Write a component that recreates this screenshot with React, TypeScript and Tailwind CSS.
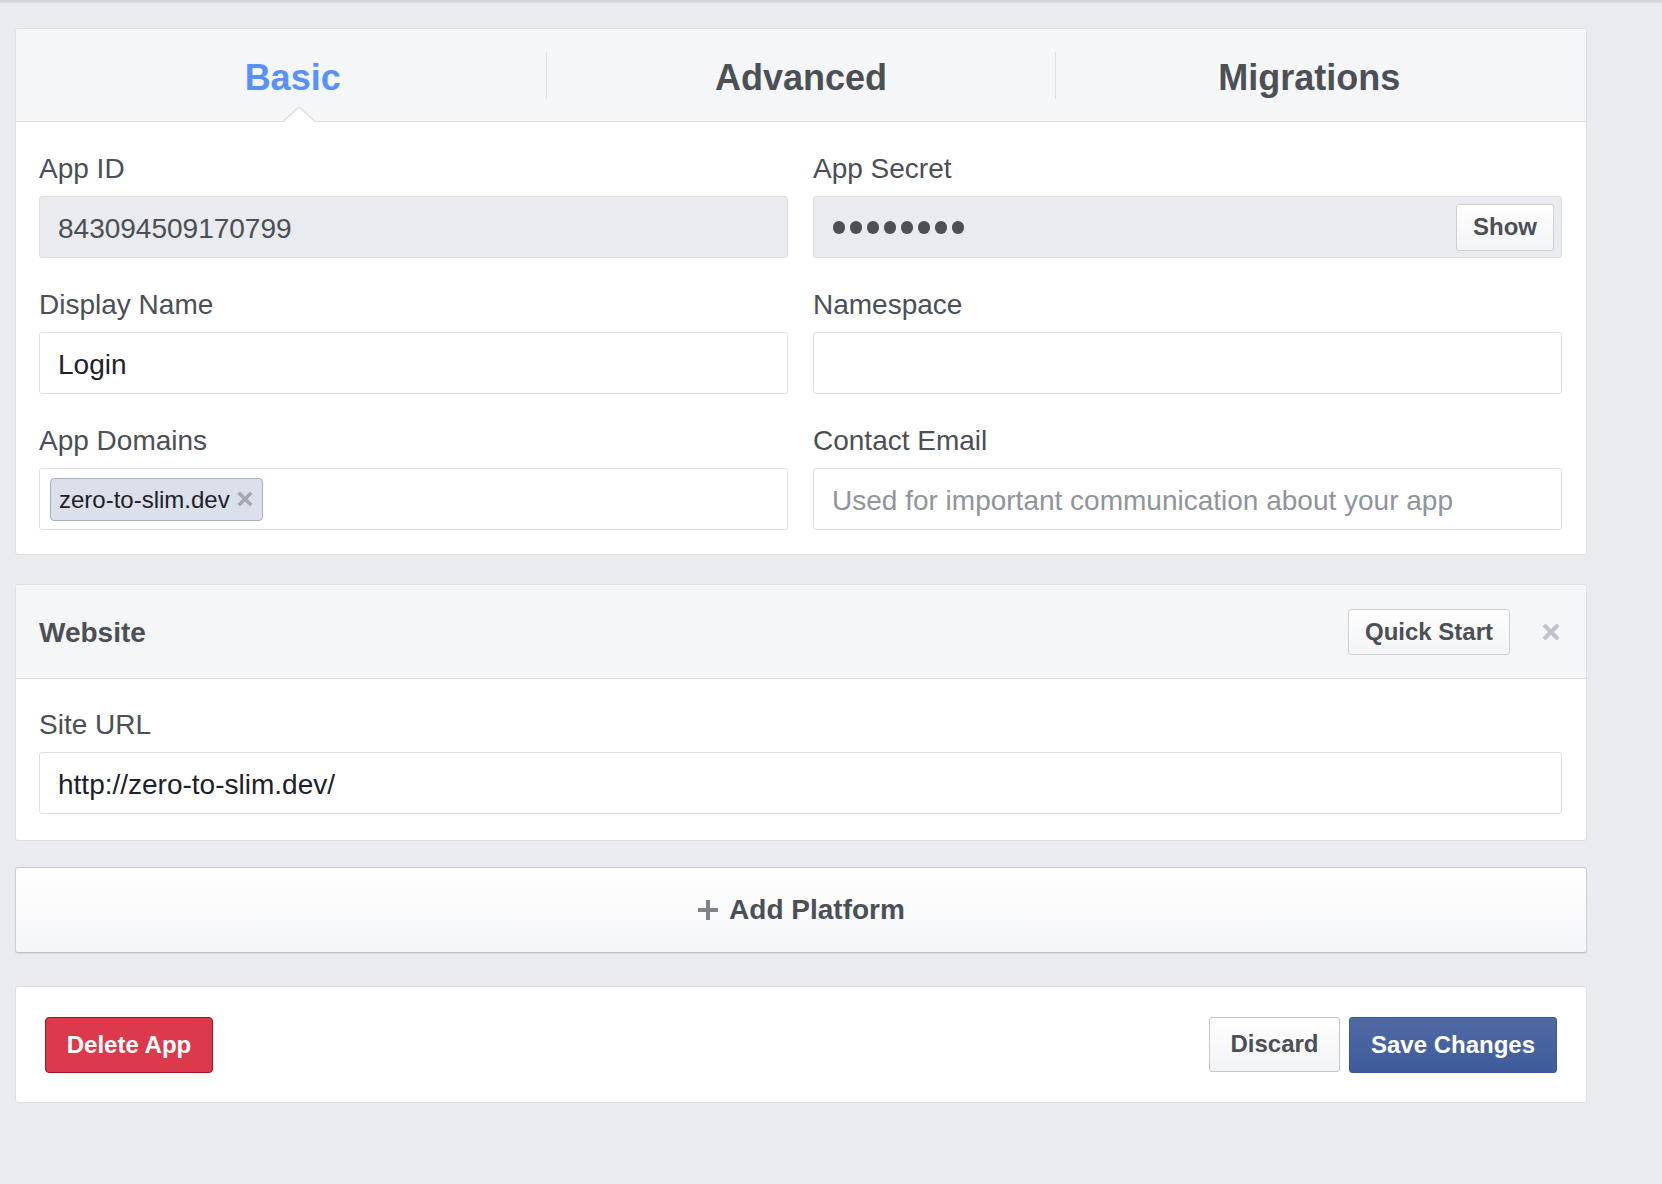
import React from "react"

const label = "block h-[32px] leading-[32px] text-[28px] text-[#4b4f56] mb-[11px]"
const inputBase =
  "h-[62px] w-full rounded-[3px] border border-[#dddfe2] flex items-center text-[28px]"

const XMark: React.FC<{ size: number; stroke: number; color: string }> = ({ size, stroke, color }) => (
  <svg width={size} height={size} viewBox="0 0 20 20">
    <path d="M3 3 L17 17 M17 3 L3 17" stroke={color} strokeWidth={stroke} strokeLinecap="butt" />
  </svg>
)

const Field: React.FC<{ title: string; children: React.ReactNode }> = ({ title, children }) => (
  <div>
    <span className={label}>{title}</span>
    {children}
  </div>
)

const tabs = ["Basic", "Advanced", "Migrations"]

export default function App() {
  return (
    <div className="min-h-[1184px] bg-[#e9ebee] font-['Liberation_Sans',Arial,sans-serif]">
      <div className="h-[3px] bg-gradient-to-b from-[#cbcdd1] to-[#dfe1e4]" />
      <div className="w-[1572px] ml-[15px] pt-[25px] pb-[40px]">
        {/* app settings card */}
        <div className="rounded-[3px] border border-[#dddfe2] bg-white">
          <div className="relative h-[93px] bg-[#f5f6f7] border-b border-[#dddfe2] rounded-t-[3px] flex items-center px-[23px]">
            {tabs.map((t, i) => (
              <React.Fragment key={t}>
                {i > 0 && <div className="w-px h-[47px] bg-[#dddfe2]" />}
                <div
                  className={`flex-1 text-center text-[36px] font-bold pt-[6px] ${
                    i === 0 ? "text-[#5890ff]" : "text-[#4b4f56]"
                  }`}
                >
                  {t}
                </div>
              </React.Fragment>
            ))}
            <svg
              className="absolute left-[267px] bottom-[-1px]"
              width="32"
              height="16"
              viewBox="0 0 32 16"
            >
              <polygon points="0,16 16,1 32,16" fill="#ffffff" />
              <polyline points="0,15.5 16,1 32,15.5" fill="none" stroke="#dddfe2" strokeWidth="1.5" />
            </svg>
          </div>

          <div className="pt-[31px] pb-[24px] pl-[23px] pr-[24px] grid grid-cols-2 gap-x-[25px] gap-y-[31px]">
            <Field title="App ID">
              <div className={`${inputBase} bg-[#e9ebee] pl-[18px] pt-[3px] text-[#4b4f56]`}>843094509170799</div>
            </Field>
            <Field title="App Secret">
              <div className={`${inputBase} bg-[#e9ebee] pl-[19px] pr-[7px] justify-between`}>
                <div className="flex gap-[5px]">
                  {Array.from({ length: 8 }).map((_, i) => (
                    <span key={i} className="w-[12px] h-[13px] rounded-full bg-[#4b4f56]" />
                  ))}
                </div>
                <button className="h-[47px] w-[98px] rounded-[3px] border border-[#ced0d4] bg-gradient-to-b from-white to-[#f3f4f6] text-[24px] font-bold text-[#4b4f56]">
                  Show
                </button>
              </div>
            </Field>
            <Field title="Display Name">
              <div className={`${inputBase} bg-white pl-[18px] pt-[3px] text-[#1d2129]`}>Login</div>
            </Field>
            <Field title="Namespace">
              <div className={`${inputBase} bg-white`} />
            </Field>
            <Field title="App Domains">
              <div className={`${inputBase} bg-white pl-[10px]`}>
                <span className="h-[43px] flex items-center gap-[6px] pl-[8px] pr-[8px] rounded-[4px] border border-[#a3b1cf] bg-[#dbe0eb] text-[24px] text-[#1d2129]">
                  <span className="pt-[2px]">zero-to-slim.dev</span>
                  <XMark size={18} stroke={4} color="#a4a8b0" />
                </span>
              </div>
            </Field>
            <Field title="Contact Email">
              <div className={`${inputBase} bg-white pl-[18px] pt-[3px] text-[#90949c]`}>
                Used for important communication about your app
              </div>
            </Field>
          </div>
        </div>

        {/* website platform */}
        <div className="mt-[29px] rounded-[3px] border border-[#dddfe2] bg-white">
          <div className="h-[94px] bg-[#f5f6f7] border-b border-[#dddfe2] rounded-t-[3px] flex items-center pl-[23px] pr-[25px]">
            <span className="flex-1 text-[28px] font-bold text-[#4b4f56] pt-[2px]">Website</span>
            <button className="h-[46px] w-[162px] rounded-[3px] border border-[#ced0d4] bg-gradient-to-b from-white to-[#f3f4f6] text-[24px] font-bold text-[#4b4f56]">
              Quick Start
            </button>
            <span className="ml-[31px]">
              <XMark size={20} stroke={4} color="#bec2c9" />
            </span>
          </div>
          <div className="pt-[30px] pb-[26px] pl-[23px] pr-[24px]">
            <Field title="Site URL">
              <div className={`${inputBase} bg-white pl-[18px] pt-[3px] text-[#1d2129]`}>http://zero-to-slim.dev/</div>
            </Field>
          </div>
        </div>

        {/* add platform */}
        <button className="mt-[26px] w-full h-[86px] rounded-[3px] border border-[#ccd0d5] border-t-[#c6c8cc] border-b-[#bfc2c7] bg-gradient-to-b from-white to-[#f5f6f8] shadow-[0_1px_1px_rgba(0,0,0,0.08)] flex items-center justify-center gap-[10px]">
          <svg width="22" height="22" viewBox="0 0 22 22">
            <path d="M11 1 V21 M1 11 H21" stroke="#7f838b" strokeWidth="4" />
          </svg>
          <span className="text-[28px] font-bold text-[#4b4f56]">Add Platform</span>
        </button>

        {/* actions */}
        <div className="mt-[33px] rounded-[3px] border border-[#dddfe2] bg-white h-[117px] flex items-center pl-[29px] pr-[29px]">
          <button className="h-[56px] w-[168px] rounded-[4px] border border-[#a50f1f] bg-[#dc3a4c] text-white text-[24px] font-bold">
            Delete App
          </button>
          <div className="ml-auto flex gap-[9px]">
            <button className="h-[55px] w-[131px] rounded-[3px] border border-[#c4c6ca] bg-gradient-to-b from-white to-[#f3f4f6] text-[24px] font-bold text-[#4b4f56]">
              Discard
            </button>
            <button className="h-[56px] w-[208px] rounded-[3px] border border-[#365899] bg-gradient-to-b from-[#506aa3] to-[#3e5c9b] text-white text-[24px] font-bold">
              Save Changes
            </button>
          </div>
        </div>
      </div>
    </div>
  )
}
